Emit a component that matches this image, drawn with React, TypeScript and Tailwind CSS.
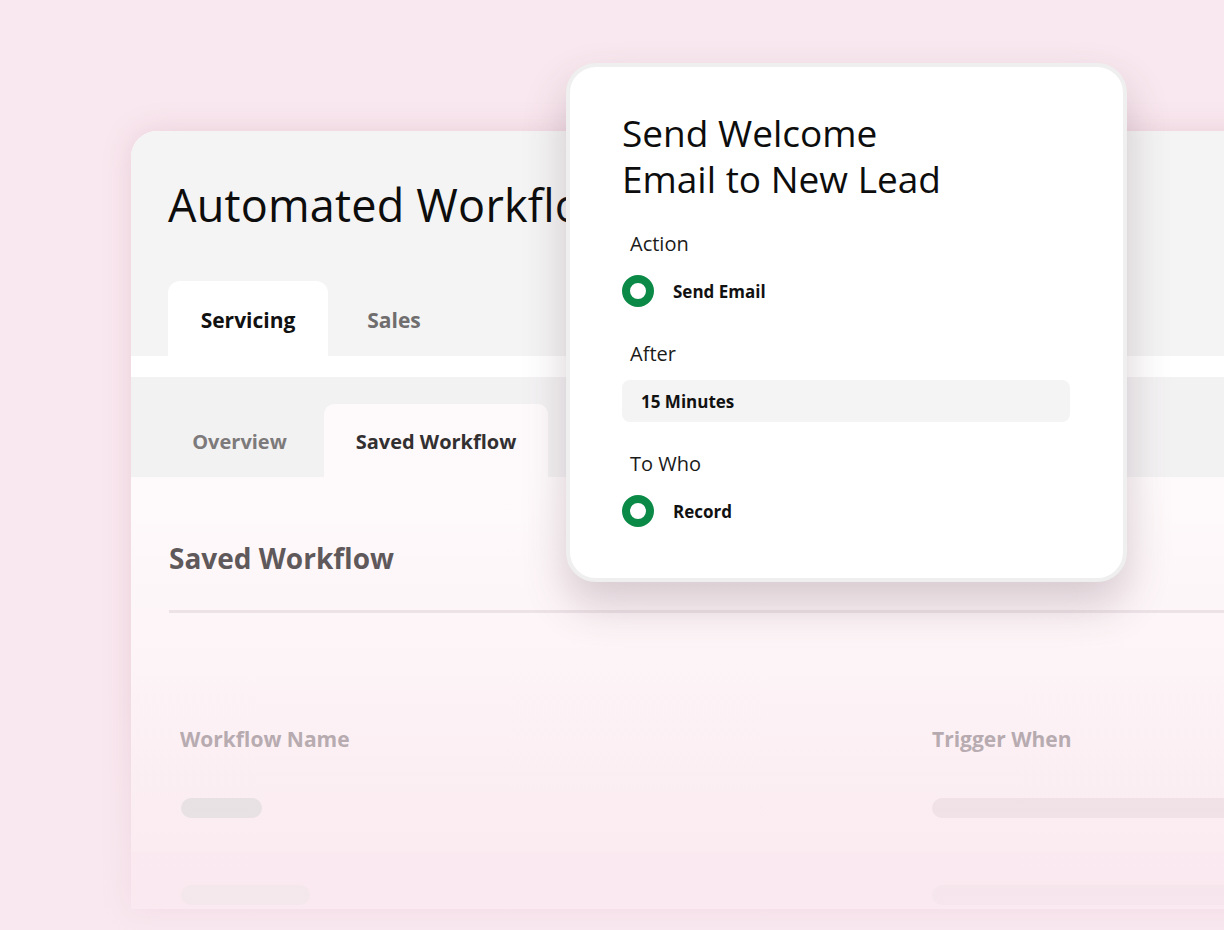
import React from "react";

function Radio() {
  return (
    <span className="block w-[32px] h-[32px] rounded-full border-[8px] border-[#0b8a47] bg-white shrink-0" />
  );
}

export default function App() {
  return (
    <div
      className="relative w-full h-[930px] overflow-hidden bg-[#f9e8ef]"
      style={{ fontFamily: '"Open Sans", "Noto Sans", sans-serif' }}
    >
      {/* main card */}
      <div className="ml-[131px] mt-[131px] w-[1200px] h-[778px] rounded-tl-[26px] overflow-hidden bg-[#fefafb] shadow-[0_0_28px_rgba(190,130,155,0.25)] flex flex-col">
        {/* header */}
        <div className="bg-[#f4f4f4] pl-[37px] pt-[46px] flex flex-col">
          <h1 className="text-[45px] leading-[56px] font-medium text-[#0d0d0d] tracking-[0.2px]">
            Automated Workflows
          </h1>
          <div className="mt-[48px] flex">
            <div className="w-[160px] h-[75px] pt-[5px] bg-white rounded-t-[12px] flex items-center justify-center text-[21px] font-bold text-[#111]">
              Servicing
            </div>
            <div className="w-[132px] h-[75px] pt-[5px] flex items-center justify-center text-[21px] font-bold text-[#6f6d6e]">
              Sales
            </div>
          </div>
        </div>
        <div className="h-[21px] bg-white" />
        {/* sub tabs */}
        <div className="h-[100px] bg-[#f3f2f3] pl-[24px] flex items-end">
          <div className="w-[169px] h-[73px] pt-[2px] flex items-center justify-center text-[20px] font-bold text-[#7d7a7b]">
            Overview
          </div>
          <div className="w-[224px] h-[73px] pt-[2px] bg-[#fefafb] rounded-t-[10px] flex items-center justify-center text-[20px] font-bold text-[#333032]">
            Saved Workflow
          </div>
        </div>
        {/* content */}
        <div className="flex-1 bg-gradient-to-b from-[#fefafb] to-[#fbecf1] pl-[38px] flex flex-col">
          <h2 className="mt-[62px] text-[28px] leading-[38px] font-bold text-[#5f595b]">
            Saved Workflow
          </h2>
          <div className="mt-[33px] h-[3px] bg-[#ede3e7]" />
          <div className="mt-[111px] flex text-[21px] font-bold text-[#ada2a7]">
            <div className="w-[763px] pl-[11px]">Workflow Name</div>
            <div>Trigger When</div>
          </div>
          <div className="mt-[42px] flex items-center">
            <div className="w-[763px] pl-[12px]">
              <div className="w-[81px] h-[20px] rounded-full bg-[#e1dfdf]" />
            </div>
            <div className="flex-1 h-[20px] rounded-l-full bg-[#ecdfe3]" />
          </div>
          <div className="mt-[34px] -ml-[38px] pl-[38px] flex-1 bg-[#fbeaf0] flex items-start pt-[33px]">
            <div className="w-[763px] pl-[12px]">
              <div className="w-[129px] h-[20px] rounded-full bg-[#efe7e9]" />
            </div>
            <div className="flex-1 h-[20px] rounded-l-full bg-[#f3e4ea]" />
          </div>
        </div>
      </div>

      {/* fade overlay */}
      <div className="pointer-events-none absolute left-0 right-0 top-[680px] bottom-0 bg-gradient-to-b from-[rgba(249,232,239,0)] to-[rgba(249,232,239,0.55)]" />

      {/* popup */}
      <div className="absolute left-[566px] top-[63px] w-[561px] h-[519px] rounded-[30px] border-[4px] border-[#efefef] bg-white shadow-[0_22px_44px_rgba(90,60,75,0.24)] pl-[52px] pt-[43px] text-[#111]">
        <div className="text-[37px] leading-[46px] font-normal text-[#0d0d0d]">
          <div>Send Welcome</div>
          <div>Email to New Lead</div>
        </div>
        <div className="mt-[28px] ml-[8px] text-[20px] leading-[28px] text-[#1a1a1a]">Action</div>
        <div className="mt-[17px] flex items-center gap-[19px]">
          <Radio />
          <span className="text-[17px] pt-[2px] font-bold text-[#111]">Send Email</span>
        </div>
        <div className="mt-[33px] ml-[8px] text-[20px] leading-[28px] text-[#1a1a1a]">After</div>
        <div className="mt-[12px] w-[448px] h-[42px] rounded-[8px] bg-[#f4f4f4] pl-[19px] pt-[2px] flex items-center text-[17px] font-bold text-[#111]">
          15 Minutes
        </div>
        <div className="mt-[28px] ml-[8px] text-[20px] leading-[28px] text-[#1a1a1a]">To Who</div>
        <div className="mt-[17px] flex items-center gap-[19px]">
          <Radio />
          <span className="text-[17px] pt-[2px] font-bold text-[#111]">Record</span>
        </div>
      </div>
    </div>
  );
}
